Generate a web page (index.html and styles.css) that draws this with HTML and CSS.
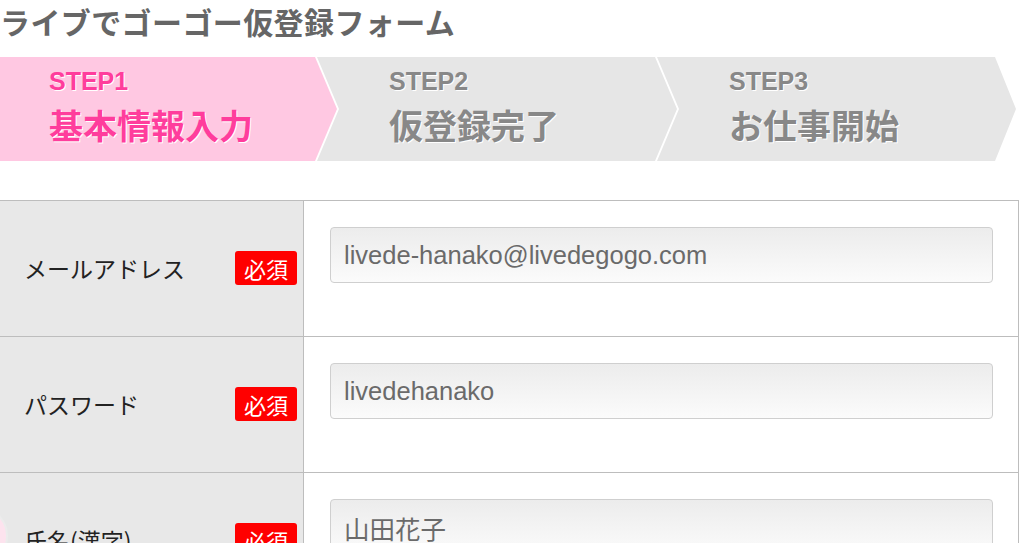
FILE: index.html
```html
<!DOCTYPE html>
<html lang="ja">
<head>
<meta charset="utf-8">
<title>ライブでゴーゴー仮登録フォーム</title>
<link rel="stylesheet" href="styles.css">
</head>
<body>
<h1 class="page-title">ライブでゴーゴー仮登録フォーム</h1>

<ol class="steps">
  <li class="step step-first step-active">
    <span class="step-no">STEP1</span>
    <span class="step-name">基本情報入力</span>
  </li>
  <li class="step step-mid">
    <span class="step-no">STEP2</span>
    <span class="step-name">仮登録完了</span>
  </li>
  <li class="step step-last">
    <span class="step-no">STEP3</span>
    <span class="step-name">お仕事開始</span>
  </li>
</ol>

<div class="form">
  <div class="form-row">
    <div class="form-label"><span class="label-text">メールアドレス</span><span class="badge">必須</span></div>
    <div class="form-field"><input class="text-input" type="text" value="livede-hanako@livedegogo.com" readonly></div>
  </div>
  <div class="form-row">
    <div class="form-label"><span class="label-text">パスワード</span><span class="badge">必須</span></div>
    <div class="form-field"><input class="text-input" type="text" value="livedehanako" readonly></div>
  </div>
  <div class="form-row">
    <div class="form-label"><span class="label-text">氏名(漢字)</span><span class="badge">必須</span></div>
    <div class="form-field"><input class="text-input" type="text" value="山田花子" readonly></div>
  </div>
</div>

<div class="side-bubble"></div>
</body>
</html>
```

FILE: styles.css
```css
html, body {
  margin: 0;
  padding: 0;
  background: #fff;
}
body {
  font-family: "Noto Sans CJK JP", "Noto Sans", sans-serif;
  color: #222;
  overflow: hidden;
  position: relative;
  height: 543px;
}

.page-title {
  margin: 0;
  padding-top: 6px;
  height: 57px;
  box-sizing: border-box;
  font-size: 30px;
  line-height: 30px;
  font-weight: 700;
  color: #666;
  letter-spacing: 0.4px;
}

.steps {
  list-style: none;
  margin: 0;
  padding: 0;
  display: flex;
  height: 104px;
}
.step {
  height: 104px;
  box-sizing: border-box;
  padding-top: 9px;
  background: #e6e6e6;
  color: #888;
  display: flex;
  flex-direction: column;
  text-shadow: 1px 1px 0 #fff;
}
.step-first {
  width: 340px;
  padding-left: 49px;
  clip-path: polygon(0 0, 315px 0, 337px 52px, 315px 104px, 0 104px);
}
.step-mid {
  width: 360px;
  margin-left: -23px;
  padding-left: 72px;
  clip-path: polygon(0 0, 338px 0, 360px 52px, 338px 104px, 0 104px, 22px 52px);
}
.step-last {
  width: 359px;
  margin-left: -20px;
  padding-left: 72px;
  clip-path: polygon(0 0, 338px 0, 359px 52px, 338px 104px, 0 104px, 22px 52px);
}
.step-active {
  background: #ffc8e2;
  color: #ff3d9c;
}
.step-no {
  font-family: "Liberation Sans", Arial, sans-serif;
  font-weight: 700;
  font-size: 25px;
  line-height: 30px;
}
.step-name {
  margin-top: 9px;
  font-weight: 700;
  font-size: 34px;
  line-height: 40px;
}

.form {
  margin-top: 39px;
  width: 1019px;
  border-top: 1px solid #bdbdbd;
  border-right: 1px solid #bdbdbd;
  box-sizing: border-box;
}
.form-row {
  display: grid;
  grid-template-columns: 304px 1fr;
  height: 136px;
  border-bottom: 1px solid #bdbdbd;
  box-sizing: border-box;
}
.form-label {
  background: #e8e8e8;
  border-right: 1px solid #bdbdbd;
  display: flex;
  align-items: center;
  justify-content: space-between;
  padding: 0 6px 2px 24px;
}
.label-text {
  font-size: 23px;
  color: #222;
}
.badge {
  width: 62px;
  height: 34px;
  border-radius: 3px;
  background: #ff0000;
  color: #fff;
  font-size: 22px;
  line-height: 34px;
  text-align: center;
}
.form-field {
  padding: 26px 25px 0 26px;
}
.text-input {
  display: block;
  width: 100%;
  height: 56px;
  box-sizing: border-box;
  margin: 0;
  padding: 0 13px;
  border: 1px solid #cfcfcf;
  border-radius: 4px;
  background: linear-gradient(#ececec, #fbfbfb);
  font-family: "Liberation Sans", "Noto Sans CJK JP", Arial, sans-serif;
  font-size: 25.5px;
  color: #6a6a6a;
  outline: none;
}

.side-bubble {
  position: absolute;
  left: -52px;
  top: 506px;
  width: 56px;
  height: 56px;
  border-radius: 50%;
  background: #fde3ee;
  border: 2px solid #ececec;
}
```
